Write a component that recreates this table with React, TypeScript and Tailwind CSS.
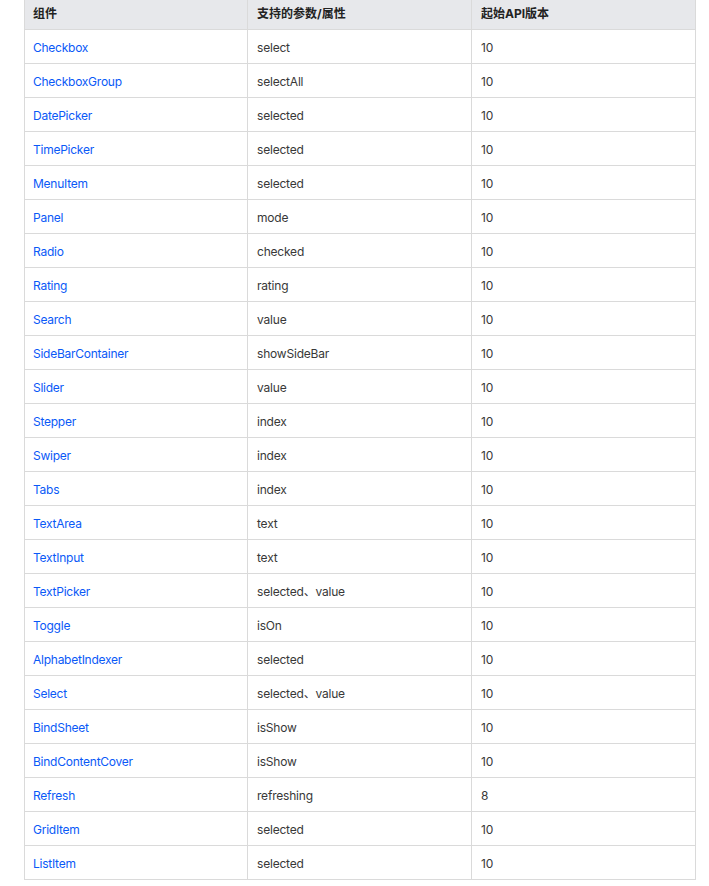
const rows: [string, string, string][] = [
  ['Checkbox', 'select', '10'],
  ['CheckboxGroup', 'selectAll', '10'],
  ['DatePicker', 'selected', '10'],
  ['TimePicker', 'selected', '10'],
  ['MenuItem', 'selected', '10'],
  ['Panel', 'mode', '10'],
  ['Radio', 'checked', '10'],
  ['Rating', 'rating', '10'],
  ['Search', 'value', '10'],
  ['SideBarContainer', 'showSideBar', '10'],
  ['Slider', 'value', '10'],
  ['Stepper', 'index', '10'],
  ['Swiper', 'index', '10'],
  ['Tabs', 'index', '10'],
  ['TextArea', 'text', '10'],
  ['TextInput', 'text', '10'],
  ['TextPicker', 'selected、value', '10'],
  ['Toggle', 'isOn', '10'],
  ['AlphabetIndexer', 'selected', '10'],
  ['Select', 'selected、value', '10'],
  ['BindSheet', 'isShow', '10'],
  ['BindContentCover', 'isShow', '10'],
  ['Refresh', 'refreshing', '8'],
  ['GridItem', 'selected', '10'],
  ['ListItem', 'selected', '10'],
]

export default function App() {
  return (
    <div className="min-h-screen bg-white pl-6 pr-[13px] font-['Inter','Noto_Sans_CJK_SC',sans-serif] text-[12px]">
      <div className="grid grid-cols-[223px_224px_224px] border-l border-[#dadada]">
        {['组件', '支持的参数/属性', '起始API版本'].map((h, i) => (
          <div
            key={h}
            className={`flex h-[30px] items-center border-r border-b border-[#dadada] bg-[#e7e8eb] pb-[2px] font-bold text-[#222] ${i === 0 ? 'pl-2' : 'pl-[9px]'}`}
          >
            {h}
          </div>
        ))}
        {rows.map(([name, prop, ver]) => (
          <div key={name} className="contents">
            <div className="flex h-[34px] items-center border-r border-b border-[#dadada] pl-2 pt-[2px] tracking-[-0.25px]">
              <a href="#" className="text-[#0a59f7]">
                {name}
              </a>
            </div>
            <div className="flex h-[34px] items-center border-r border-b border-[#dadada] pl-[9px] pt-[2px] tracking-[-0.2px] text-[#383838]">
              {prop}
            </div>
            <div className="flex h-[34px] items-center border-r border-b border-[#dadada] pl-[9px] pt-[2px] tracking-[-0.2px] text-[#383838]">
              {ver}
            </div>
          </div>
        ))}
      </div>
    </div>
  )
}
